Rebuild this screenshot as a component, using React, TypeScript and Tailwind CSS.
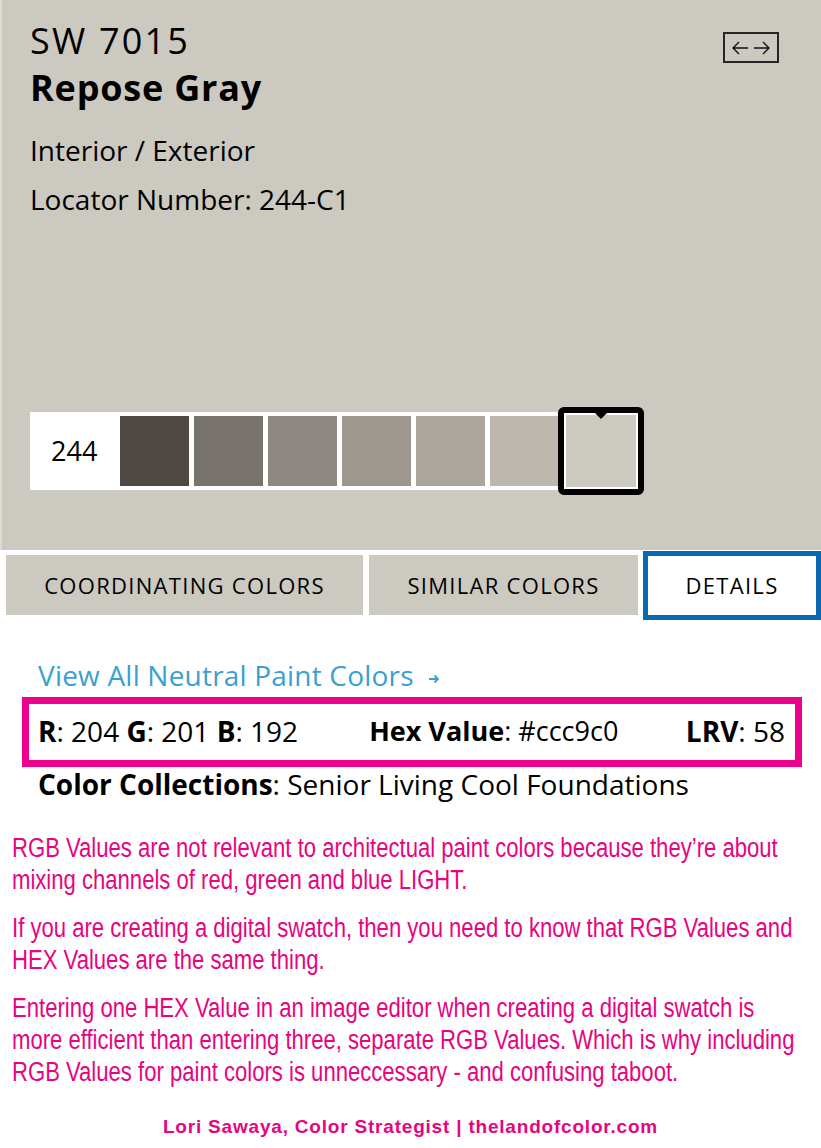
import React from "react";

const swatches = ["#4f4842", "#79736d", "#8f8882", "#9e9790", "#aba59e", "#bdb7ae"];

const paras: string[][] = [
  [
    "RGB Values are not relevant to architectual paint colors because they’re about",
    "mixing channels of red, green and blue LIGHT.",
  ],
  [
    "If you are creating a digital swatch, then you need to know that RGB Values and",
    "HEX Values are the same thing.",
  ],
  [
    "Entering one HEX Value in an image editor when creating a digital swatch is",
    "more efficient than entering three, separate RGB Values. Which is why including",
    "RGB Values for paint colors is unneccessary - and confusing taboot.",
  ],
];

export default function App() {
  return (
    <div className="relative w-[821px] h-[1148px] overflow-hidden bg-white font-['Open_Sans',sans-serif] text-black">
      {/* top colour panel */}
      <div className="h-[550px] bg-[#ccc9c1] border-l-2 border-[#dedbd6] pl-[28px] pt-[21px]">
        <div className="flex justify-between">
          <div>
            <div className="text-[36px] leading-[40px] tracking-[2.2px]">SW 7015</div>
            <div className="text-[36px] leading-[54px] font-bold tracking-[0.8px]">Repose Gray</div>
            <div className="mt-[15px] text-[28px] leading-[40px]">Interior / Exterior</div>
            <div className="mt-[9px] text-[28px] leading-[40px]">Locator Number: 244-C1</div>
          </div>
          <div className="mr-[42px] mt-[11px] flex h-[31px] w-[56px] items-center justify-center border-2 border-[#262626]">
            <svg width="40" height="16" viewBox="0 0 40 16" fill="none" stroke="#111" strokeWidth="1.4">
              <path d="M2 8h15M8 2L2 8l6 6" />
              <path d="M23 8h15M32 2l6 6-6 6" />
            </svg>
          </div>
        </div>

        {/* swatch strip */}
        <div className="mt-[188px] flex items-center">
          <div className="flex h-[78px] items-center gap-[5px] bg-white">
            <div className="w-[85px] pl-[21px] text-[27px]">244</div>
            {swatches.map((c, i) => (
              <div key={i} className={i === 5 ? "h-[70px] w-[68px]" : "h-[70px] w-[69px]"} style={{ backgroundColor: c }} />
            ))}
          </div>
          <div className="relative h-[88px] w-[86px] rounded-[6px] border-[6px] border-black bg-black">
            <div className="h-full w-full border-2 border-white bg-[#ccc9c1]" />
            <div className="absolute left-1/2 top-0 h-0 w-0 -translate-x-1/2 border-x-[6px] border-t-[6px] border-x-transparent border-t-black" />
          </div>
        </div>
      </div>

      {/* tabs */}
      <div className="flex items-start">
        <div className="ml-[6px] mt-[5px] flex h-[60px] w-[357px] items-center justify-center bg-[#ccc9c1] text-[22px] tracking-[1.3px]">
          COORDINATING COLORS
        </div>
        <div className="ml-[6px] mt-[5px] flex h-[60px] w-[269px] items-center justify-center bg-[#ccc9c1] text-[22px] tracking-[1.3px]">
          SIMILAR COLORS
        </div>
        <div className="ml-[5px] mt-[1px] flex h-[69px] w-[178px] items-center justify-center border-[5px] border-[#0a68b0] bg-white text-[22px] tracking-[1.3px]">
          DETAILS
        </div>
      </div>

      {/* details */}
      <div className="mt-[39px] flex h-[32px] items-center pl-[38px] text-[28px] leading-[32px] tracking-[0.2px] text-[#3a9fd1]">
        <span>View All Neutral Paint Colors</span>
        <svg className="ml-[14px] mt-[8px]" width="12" height="10" viewBox="0 0 12 10" fill="none" stroke="#3a9fd1" strokeWidth="1.8">
          <path d="M1 5h9M6.5 1.5L10 5l-3.5 3.5" />
        </svg>
      </div>
      <div className="ml-[22px] mt-[6px] flex h-[70px] w-[780px] items-center border-[7px] border-[#ec008c] pb-[3px] pl-[9px] pr-[10px] text-[28px] leading-[32px]">
        <span>
          <b>R</b>: 204 <b>G</b>: 201 <b>B</b>: 192
        </span>
        <span className="ml-[71px] text-[27px]">
          <b>Hex Value</b>: #ccc9c0
        </span>
        <span className="ml-auto">
          <b>LRV</b>: 58
        </span>
      </div>
      <div className="mt-[1px] pl-[38px] text-[28px] leading-[32px]">
        <b>Color Collections</b>: Senior Living Cool Foundations
      </div>

      {/* commentary */}
      <div className="mt-[32px] flex flex-col gap-[16px] pl-[12px] font-['Liberation_Sans',Arial,sans-serif] text-[27px] leading-[32px] text-[#e6047f]">
        {paras.map((lines, i) => (
          <div key={i}>
            {lines.map((l, j) => (
              <div key={j} className="w-[1000px] origin-left scale-x-[0.818] whitespace-nowrap">
                {l}
              </div>
            ))}
          </div>
        ))}
      </div>
      <div className="mt-[27px] text-center font-['Liberation_Sans',Arial,sans-serif] text-[19px] font-bold leading-[24px] tracking-[0.8px] text-[#e6047f]">
        Lori Sawaya, Color Strategist | thelandofcolor.com
      </div>
    </div>
  );
}
